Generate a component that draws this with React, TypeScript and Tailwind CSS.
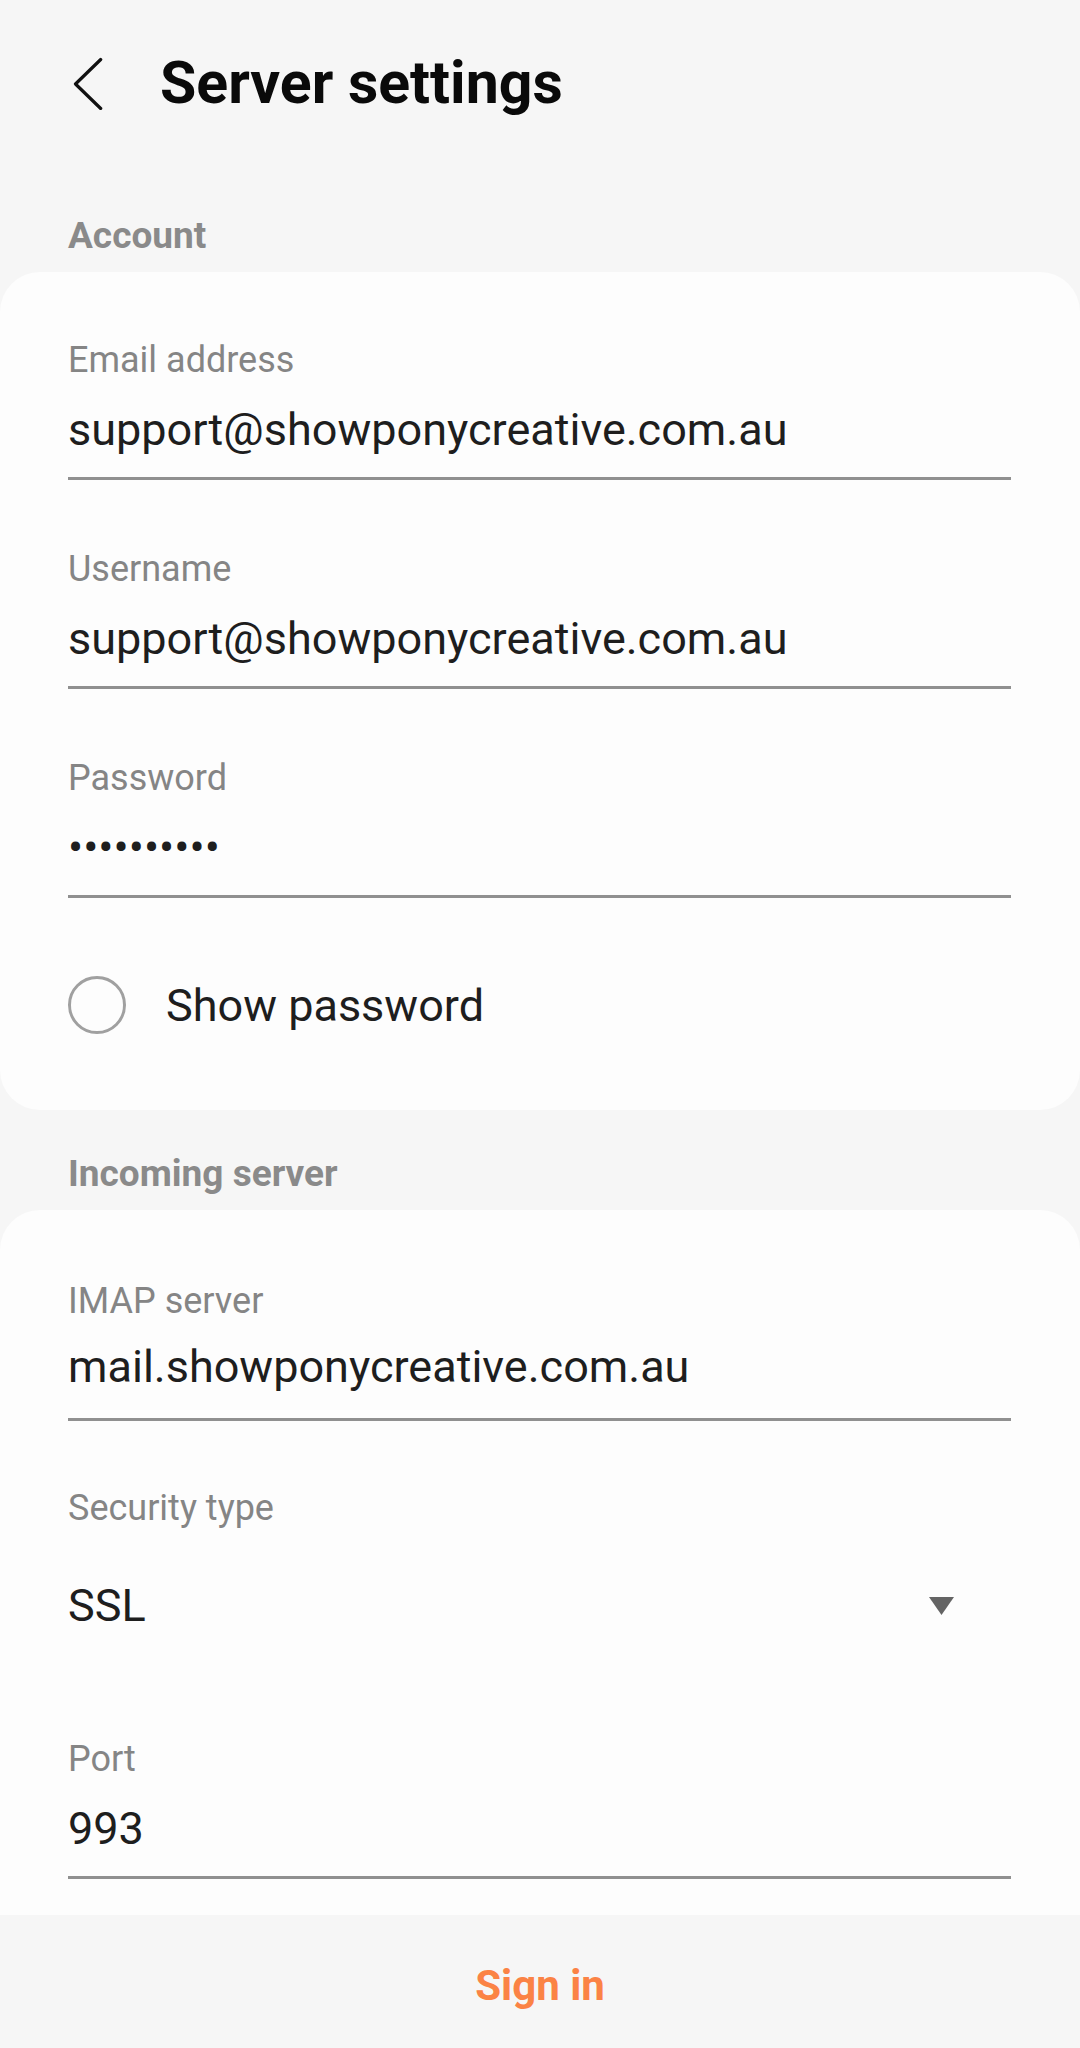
import React from "react";

function Field({ label, value, first, valueGap = 29 }: { label: string; value: string; first?: boolean; valueGap?: number }) {
  return (
    <div className={first ? "" : "mt-[72px]"}>
      <div className="text-[36px] leading-[36px] text-[#858585] -mt-[1px]">{label}</div>
      <div className={(valueGap === 29 ? "mt-[29px]" : "mt-[25px]") + " text-[45px] leading-[45px] text-[#1e1e1e] whitespace-nowrap"}>{value}</div>
      <div className={(valueGap === 29 ? "mt-[25px]" : "mt-[29px]") + " h-[3px] bg-[#909090]"} />
    </div>
  );
}

export default function App() {
  return (
    <div className="h-[2048px] w-[1080px] bg-[#f6f6f6] flex flex-col overflow-hidden font-['Roboto',sans-serif]">
      <div className="flex-1 flex flex-col overflow-hidden">
        {/* Header */}
        <div className="flex items-center pt-[54px]">
          <svg className="ml-[73px]" width="30" height="53" viewBox="0 0 30 53" fill="none">
            <polyline points="27.7,2.5 2.5,27 27.7,51.5" stroke="#111" strokeWidth="3.2" strokeLinecap="round" strokeLinejoin="round" />
          </svg>
          <div className="ml-[57px] text-[59px] leading-[58px] font-bold text-[#0a0a0a]">Server settings</div>
        </div>

        {/* Account section */}
        <div className="mt-[105px] px-[68px] text-[37px] leading-[37px] font-bold text-[#8a8a8a]">Account</div>
        <div className="mt-[18px] bg-[#fdfdfd] rounded-[40px] pt-[71px] pb-[76px] pl-[68px] pr-[69px]">
          <Field first label="Email address" value="support@showponycreative.com.au" />
          <Field label="Username" value="support@showponycreative.com.au" />
          <Field label="Password" value="••••••••••" />
          <div className="mt-[78px] flex items-center">
            <div className="w-[58px] h-[58px] rounded-full border-[3px] border-[#a0a0a0]" />
            <div className="ml-[40px] text-[45px] leading-[45px] text-[#1e1e1e]">Show password</div>
          </div>
        </div>

        {/* Incoming server */}
        <div className="mt-[45px] px-[68px] text-[37px] leading-[37px] font-bold text-[#8a8a8a]">Incoming server</div>
        <div className="mt-[18px] flex-1 bg-[#fdfdfd] rounded-t-[40px] pt-[74px] pl-[68px] pr-[69px]">
          <Field first valueGap={25} label="IMAP server" value="mail.showponycreative.com.au" />
          <div className="mt-[70px]">
            <div className="text-[36px] leading-[36px] text-[#858585] -mt-[1px]">Security type</div>
            <div className="mt-[57px] flex items-center justify-between">
              <div className="text-[45px] leading-[45px] text-[#1e1e1e]">SSL</div>
              <svg className="mr-[57px]" width="25" height="18" viewBox="0 0 25 18">
                <polygon points="0,0 25,0 12.5,18" fill="#646464" />
              </svg>
            </div>
          </div>
          <div className="mt-[114px]">
            <div className="text-[36px] leading-[36px] text-[#858585] -mt-[1px]">Port</div>
            <div className="mt-[29px] text-[45px] leading-[45px] text-[#1e1e1e]">993</div>
            <div className="mt-[25px] h-[3px] bg-[#909090]" />
          </div>
        </div>
      </div>

      {/* Bottom bar */}
      <div className="h-[133px] shrink-0 bg-[#f6f6f6] flex items-center justify-center pt-[8px]">
        <div className="text-[42px] leading-[42px] font-bold text-[#fb8345]">Sign in</div>
      </div>
    </div>
  );
}
